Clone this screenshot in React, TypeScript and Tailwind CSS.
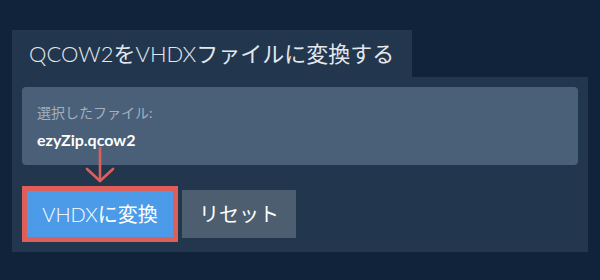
import React from "react";

const L = ({ children }: { children: React.ReactNode }) => (
  <span className="font-light">{children}</span>
);

export default function App() {
  return (
    <div
      className="w-[600px] h-[280px] bg-[#10233a] pt-[30px] pl-[12px]"
      style={{ fontFamily: 'Lato, "Noto Sans CJK JP", sans-serif' }}
    >
      <div className="inline-flex h-[47px] items-center bg-[#22364d] pl-[17px] pr-[18px] text-[22px] font-normal text-[#e3e8ee] leading-none">
        <L>QCOW2</L>を<L>VHDX</L>ファイルに変換する
      </div>
      <div className="relative w-[576px] bg-[#22364d] px-[10px] pt-[10px] pb-[10px]">
        <div className="h-[78px] rounded-[4px] bg-[#4a6079] pl-[15px] pt-[16px]">
          <div className="text-[14px] leading-[20px] text-[#a3b0bd]">選択したファイル:</div>
          <div className="mt-[5px] text-[16px] leading-[24px] font-bold text-white">ezyZip.qcow2</div>
        </div>
        <div className="mt-[21px] flex items-center gap-[4px]">
          <button className="h-[56px] w-[156px] border-[5px] border-[#de5f5a] bg-[#4b9be8] text-[20px] text-white leading-none">
            <L>VHDX</L>に変換
          </button>
          <button className="h-[48px] w-[114px] bg-[#4c5e70] text-[20px] text-white leading-none">
            リセット
          </button>
        </div>
        <svg
          className="absolute left-[73px] top-[70px]"
          width="30"
          height="36"
          viewBox="0 0 30 36"
          fill="none"
          stroke="#de5f5a"
          strokeWidth="2.6"
          strokeLinecap="round"
        >
          <line x1="15" y1="1" x2="15" y2="34" />
          <polyline points="2,22 15,34 28,22" strokeLinejoin="round" />
        </svg>
      </div>
    </div>
  );
}
